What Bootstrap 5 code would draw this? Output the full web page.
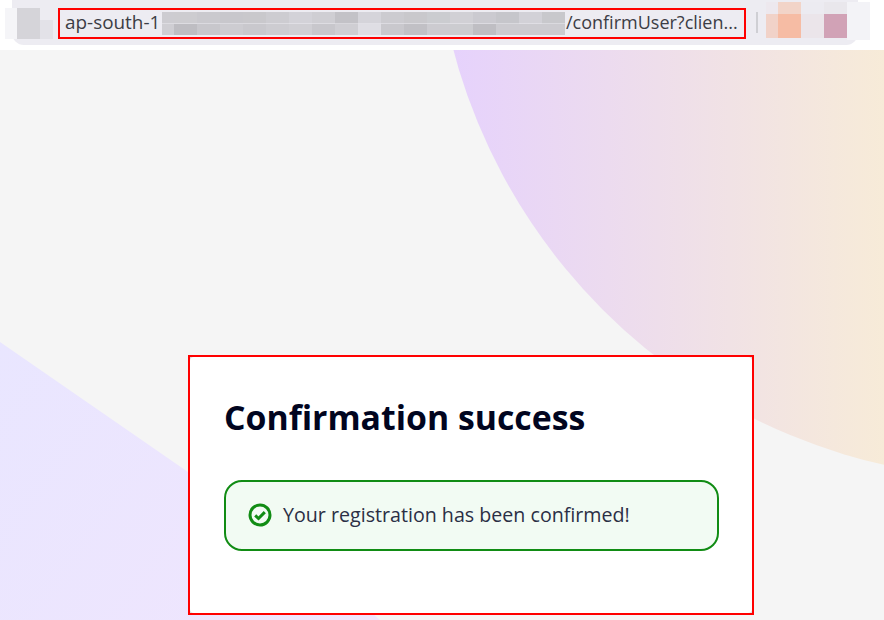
<!DOCTYPE html>
<html lang="en">
<head>
<meta charset="utf-8">
<title>Confirmation success</title>
<link href="https://cdn.jsdelivr.net/npm/bootstrap@5.3.0/dist/css/bootstrap.min.css" rel="stylesheet">
<style>
html,body{height:620px;overflow:hidden}
body{background:#f5f5f5;font-family:"Open Sans","Noto Sans",sans-serif;position:relative}
.backdrop{position:absolute;left:0;top:0;width:884px;height:620px;z-index:0}
.browser-strip{position:relative;z-index:1;height:50px;background:#fff;padding:8px 0 0 5px}
.browser-strip::before{content:"";position:absolute;left:12px;right:26px;top:0;height:45px;background:#edecf2;border-radius:0 0 12px 12px}
.browser-strip>*{position:relative}
.left-mosaic{width:48px;height:31px;background:
 linear-gradient(#edecf2,#edecf2) 35px 0/13px 12px no-repeat,
 linear-gradient(90deg,#f5f5f8 0 12px,#d5d4d9 12px 35px,#e3e2e8 35px 48px)}
.url-box{width:688px;height:31px;margin-left:5px;border:2px solid #f00;padding:2px 7px 2px 5px;overflow:hidden;white-space:nowrap;
 font-family:"Open Sans","Noto Sans",sans-serif;font-size:18px;line-height:23px;color:#3c3d45}
.url-host{flex:0 0 97px;font-size:18.9px;margin-top:-1px}
.url-mask{flex:0 0 403px;height:23px;background:
 linear-gradient(90deg,#cdccd1 0 12px,#cdccd0 12px 35px,#cac9ce 35px 58px,#c8c7cc 58px 81px,#c9c8cc 81px 104px,#cdccd1 104px 127px,#d3d2d8 127px 150px,#cfced3 150px 173px,#c3c2c7 173px 196px,#d5d4da 196px 219px,#cccbd0 219px 242px,#c9c8cc 242px 265px,#cbccd0 265px 288px,#d1d0d5 288px 311px,#cbcad0 311px 334px,#c6c6cb 334px 357px,#d2d1d7 357px 380px,#c8c8cc 380px 403px) 0 0/100% 11.5px no-repeat,
 linear-gradient(90deg,#cfced3 0 12px,#bebdc2 12px 35px,#c8c7cc 35px 58px,#cdccd1 58px 81px,#c9c8cd 81px 104px,#cdccd1 104px 127px,#d0cfd4 127px 150px,#c8c7cc 150px 173px,#cfced3 173px 196px,#dfdee4 196px 219px,#c9c8cd 219px 242px,#c1c0c5 242px 265px,#cccbd0 265px 288px,#ccccd0 288px 311px,#bfbec3 311px 334px,#cccbd0 334px 403px) 0 11.5px/100% 11.5px no-repeat}
.url-rest{flex:1 1 auto;min-width:0;padding-left:1px;margin-top:-1px}
.bar-sep{width:2px;height:21px;margin:4px 0 0 10px;background:#cfcfd4}
.right-mosaic{width:104px;height:38px;margin:-6px 0 0 8px;background:
 linear-gradient(90deg,#ede8ee 0 12px,#f2d4c8 12px 35px,#ecebf1 35px 58px,#e9e7ec 58px 81px,#f3f3f7 81px 104px) 0 0/100% 12px no-repeat,
 linear-gradient(90deg,#f1d2c8 0 12px,#f6bca4 12px 35px,#ebe5ea 35px 58px,#d1a2b6 58px 81px,#f3f3f7 81px 104px) 0 12px/100% 24px no-repeat,
 linear-gradient(90deg,transparent 81px,#f3f3f7 81px) 0 36px/100% 2px no-repeat}
.stage{position:relative;z-index:1;padding:305px 0 0 188px}
.frame-red{width:566px;height:260px;border:2px solid #f00;background:#dcdcdc}
.panel-white{height:100%;border:0;border-radius:4px;padding:39px 33px 0 35px;background:#fff}
.panel-title{font-family:"Open Sans",sans-serif;font-weight:700;font-size:33.8px;line-height:42px;color:#01051f;margin:0 0 42px -1px;white-space:nowrap}
.ok-note{height:71px;margin:0 0 0 -1px;padding:0 22px 2px;border:2.5px solid #118c14;border-radius:18px;background:#f2fbf3;color:#2b2f45;font-size:19.65px;gap:11px}
.ok-note svg{flex:none}
</style>
</head>
<body>
<svg class="backdrop" viewBox="0 0 884 620" aria-hidden="true">
  <defs>
    <linearGradient id="arcFill" x1="453" y1="0" x2="884" y2="0" gradientUnits="userSpaceOnUse">
      <stop offset="0" stop-color="#e6d2fc"/><stop offset="1" stop-color="#f7ebd8"/>
    </linearGradient>
    <linearGradient id="wedgeFill" x1="0" y1="342" x2="380" y2="620" gradientUnits="userSpaceOnUse">
      <stop offset="0" stop-color="#e9e6ff"/><stop offset="1" stop-color="#f0e5fd"/>
    </linearGradient>
  </defs>
  <circle cx="1011" cy="-98" r="577" fill="url(#arcFill)"/>
  <path d="M0 342L188 472Q290 540 380 620H0Z" fill="url(#wedgeFill)"/>
</svg>
<header class="browser-strip d-flex align-items-start">
  <div class="left-mosaic"></div>
  <div class="url-box d-flex">
    <span class="url-host">ap-south-1</span>
    <span class="url-mask"></span>
    <span class="url-rest">/confirmUser?clien...</span>
  </div>
  <div class="bar-sep"></div>
  <div class="right-mosaic"></div>
</header>
<main class="stage">
  <div class="frame-red">
    <div class="card panel-white">
      <h1 class="panel-title">Confirmation success</h1>
      <div class="alert ok-note d-flex align-items-center mb-0" role="alert">
        <svg width="24" height="24" viewBox="0 0 24 24" fill="none" stroke="#118c14" aria-hidden="true">
          <circle cx="12" cy="12" r="10" stroke-width="3"/>
          <path d="M7.2 12.4l3.3 3.1 6.3-6.4" stroke-width="3"/>
        </svg>
        <span>Your registration has been confirmed!</span>
      </div>
    </div>
  </div>
</main>
<script src="https://cdn.jsdelivr.net/npm/bootstrap@5.3.0/dist/js/bootstrap.bundle.min.js"></script>
</body>
</html>
